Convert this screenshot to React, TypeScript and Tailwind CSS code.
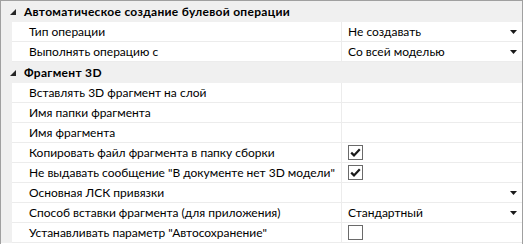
import React from 'react'

type Prop = {
  name: string
  value?: string
  dropdown?: boolean
  check?: boolean
}

const groups: { title: string; props: Prop[] }[] = [
  {
    title: 'Автоматическое создание булевой операции',
    props: [
      { name: 'Тип операции', value: 'Не создавать', dropdown: true },
      { name: 'Выполнять операцию с', value: 'Со всей моделью', dropdown: true },
    ],
  },
  {
    title: 'Фрагмент 3D',
    props: [
      { name: 'Вставлять 3D фрагмент на слой' },
      { name: 'Имя папки фрагмента' },
      { name: 'Имя фрагмента' },
      { name: 'Копировать файл фрагмента в папку сборки', check: true },
      { name: 'Не выдавать сообщение "В документе нет 3D модели"', check: true },
      { name: 'Основная ЛСК привязки', dropdown: true },
      { name: 'Способ вставки фрагмента (для приложения)', value: 'Стандартный', dropdown: true },
      { name: 'Устанавливать параметр "Автосохранение"', check: false },
    ],
  },
]

function Expander() {
  return (
    <svg width="6" height="6" viewBox="0 0 6 6" className="ml-[9px] mr-[8px]">
      <polygon points="6,0 6,6 0,6" fill="#262626" />
    </svg>
  )
}

function DropArrow() {
  return (
    <svg width="7" height="4" viewBox="0 0 7 4" className="ml-auto mr-[5px]">
      <polygon points="0,0 7,0 3.5,4" fill="#1a1a1a" />
    </svg>
  )
}

function CheckBox({ checked }: { checked: boolean }) {
  return (
    <div className="w-[15px] h-[15px] border border-[#6a6a6a] bg-white flex items-center justify-center">
      {checked && (
        <svg width="11" height="9" viewBox="0 0 11 9">
          <path d="M1.2 4.6 L4 7.4 L9.8 1.2" fill="none" stroke="#1a1a1a" strokeWidth="2.2" />
        </svg>
      )}
    </div>
  )
}

export default function App() {
  return (
    <div className="w-[526px] h-[244px] bg-white">
      <div className="w-[523px] h-[244px] border-l border-r border-t border-[#a0a0a0] bg-white text-[12px] text-[#000] font-['Lato',sans-serif] leading-none">
        {groups.map((g) => (
          <div key={g.title}>
            <div className="h-[21px] flex items-center bg-[#f0f0f0]">
              <Expander />
              <span className="font-bold tracking-[0.3px]">{g.title}</span>
            </div>
            {g.props.map((p) => (
              <div key={p.name} className="h-[20px] flex">
                <div className="w-[11px] bg-[#f0f0f0]" />
                <div className="flex-1 flex border-b border-[#ececec]">
                  <div className="w-[330px] border-r border-[#ececec] pl-[17px] flex items-center whitespace-nowrap overflow-hidden">
                    {p.name}
                  </div>
                  <div className="flex-1 pl-[6px] flex items-center">
                    {p.value && <span>{p.value}</span>}
                    {p.check !== undefined && <CheckBox checked={p.check} />}
                    {p.dropdown && <DropArrow />}
                  </div>
                </div>
              </div>
            ))}
          </div>
        ))}
      </div>
    </div>
  )
}
